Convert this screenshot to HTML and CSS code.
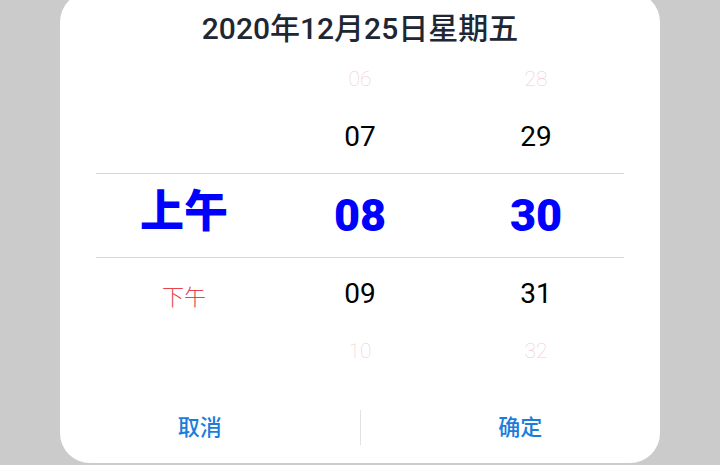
FILE: index.html
```
<!DOCTYPE html>
<html lang="zh">
<head>
<meta charset="utf-8">
<title>时间选择</title>
<link rel="stylesheet" href="styles.css">
</head>
<body>
<div class="dialog">
  <div class="title">2020年12月25日星期五</div>
  <div class="picker">
    <div class="row far">
      <div class="cell"></div>
      <div class="cell">06</div>
      <div class="cell">28</div>
    </div>
    <div class="row near">
      <div class="cell"></div>
      <div class="cell">07</div>
      <div class="cell">29</div>
    </div>
    <div class="row selected">
      <div class="cell cjk">上午</div>
      <div class="cell">08</div>
      <div class="cell">30</div>
    </div>
    <div class="row near after">
      <div class="cell cjk-light">下午</div>
      <div class="cell">09</div>
      <div class="cell">31</div>
    </div>
    <div class="row far last">
      <div class="cell"></div>
      <div class="cell">10</div>
      <div class="cell">32</div>
    </div>
  </div>
  <div class="footer">
    <div class="btn">取消</div>
    <div class="divider"></div>
    <div class="btn">确定</div>
  </div>
</div>
</body>
</html>
```
FILE: styles.css
```
html, body {
  margin: 0;
  padding: 0;
}
body {
  background: #cbcbcb;
  width: 720px;
  height: 465px;
  overflow: hidden;
  font-family: "Roboto", "Noto Sans CJK SC", sans-serif;
}
.dialog {
  width: 600px;
  height: 471px;
  margin: -8px 0 0 60px;
  background: #ffffff;
  border-radius: 30px;
  display: flex;
  flex-direction: column;
}
.title {
  padding-top: 8px;
  height: 58px;
  line-height: 58px;
  text-align: center;
  font-size: 30px;
  font-weight: 500;
  color: #1e2733;
}
.picker {
  margin: 0 36px;
  display: flex;
  flex-direction: column;
}
.row {
  display: grid;
  grid-template-columns: 1fr 1fr 1fr;
  align-items: center;
  text-align: center;
}
.row.far {
  height: 42px;
  font-size: 21px;
  font-weight: 100;
  color: #f2cbcf;
}
.row.near {
  height: 73px;
  font-size: 28px;
  font-weight: 400;
  color: #000000;
}
.row.near.after {
  height: 72px;
}
.row.selected {
  height: 83px;
  border-top: 1px solid #d8d8d8;
  border-bottom: 1px solid #d8d8d8;
  font-size: 45px;
  font-weight: 900;
  color: #0000ff;
}
.cell {
  line-height: 1;
}
.cjk {
  font-family: "Noto Sans CJK SC", sans-serif;
  font-size: 44px;
  font-weight: 900;
  padding-bottom: 16px;
}
.cjk-light {
  font-family: "Noto Sans CJK SC", sans-serif;
  font-size: 22px;
  font-weight: 300;
  color: #e5444c;
  padding-top: 2px;
}
.footer {
  padding: 38px 0 18px;
  display: grid;
  grid-template-columns: 1fr 1px 1fr;
  column-gap: 20px;
  align-items: center;
}
.btn {
  height: 35px;
  line-height: 31px;
  text-align: center;
  font-family: "Noto Sans CJK SC", sans-serif;
  font-size: 22px;
  font-weight: 500;
  color: #1a7ddb;
}
.divider {
  height: 35px;
  background: #e2e2e2;
}
```
